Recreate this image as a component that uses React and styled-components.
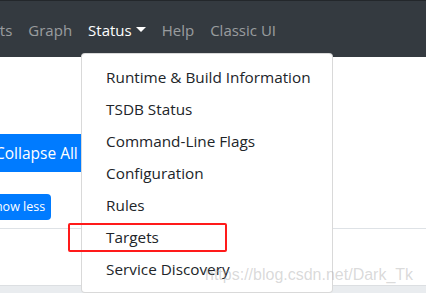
import React from "react";
import styled, { createGlobalStyle } from "styled-components";

const Global = createGlobalStyle`
  html, body {
    margin: 0;
    padding: 0;
    width: 426px;
    height: 293px;
    overflow: hidden;
    background: #ffffff;
    font-family: "Open Sans", "Noto Sans", sans-serif;
  }
`;

const Page = styled.div`
  position: relative;
  width: 426px;
  height: 293px;
  overflow: hidden;
  display: flex;
  flex-direction: column;
`;

const Navbar = styled.nav`
  height: 56px;
  background: #343a40;
  border-top: 1px solid #23272b;
  display: flex;
  align-items: center;
  flex-shrink: 0;
`;

const NavList = styled.ul`
  display: flex;
  list-style: none;
  margin: 2px 0 0 -36px;
  padding: 0;
`;

const NavItem = styled.li`
  position: relative;
`;

const NavLink = styled.a`
  display: flex;
  align-items: center;
  padding: 8px 8px;
  font-size: 15px;
  line-height: 24px;
  color: ${(p) => (p.$active ? "#ffffff" : "rgba(255,255,255,0.5)")};
  text-decoration: none;
  white-space: nowrap;
`;

const Caret = styled.span`
  display: inline-block;
  margin-left: 4px;
  margin-top: -2px;
  border-top: 5px solid #ffffff;
  border-left: 5px solid transparent;
  border-right: 5px solid transparent;
`;

const Menu = styled.div`
  position: absolute;
  top: 43px;
  left: 1px;
  width: 250px;
  padding: 7px 0 7px;
  background: #ffffff;
  border: 1px solid rgba(0, 0, 0, 0.15);
  border-radius: 4px;
  z-index: 10;
`;

const MenuItem = styled.a`
  display: block;
  padding: 4px 24px;
  font-size: 15.3px;
  line-height: 24px;
  color: #212529;
  white-space: nowrap;
`;

const Content = styled.main`
  flex: 1;
  display: flex;
  flex-direction: column;
  padding-top: 77px;
`;

const Button = styled.button`
  align-self: flex-start;
  border: none;
  background: #007bff;
  color: #ffffff;
  font-family: "Open Sans", "Noto Sans", sans-serif;
  font-size: ${(p) => (p.$small ? "12.5px" : "15.5px")};
  line-height: ${(p) => (p.$small ? "20px" : "24px")};
  padding: ${(p) => (p.$small ? "3px 6px" : "7px 12px")};
  border-radius: 4px;
  margin-left: ${(p) => (p.$small ? "-17px" : "-17px")};
  white-space: nowrap;
`;

const Spacer = styled.div`
  height: ${(p) => p.$h}px;
  flex-shrink: 0;
`;

const Rule = styled.div`
  height: 1px;
  background: #dee2e6;
  flex-shrink: 0;
`;

const Footer = styled.div`
  margin-top: auto;
  height: 7px;
  background: #e9ecef;
  border-top: 1px solid #dcdfe2;
  flex-shrink: 0;
`;

const Highlight = styled.div`
  position: absolute;
  left: 68px;
  top: 223px;
  width: 155px;
  height: 25px;
  border: 2px solid #ff1a1a;
  border-radius: 2px;
  z-index: 20;
`;

const Watermark = styled.div`
  position: absolute;
  left: 205px;
  top: 266px;
  font-family: "Liberation Sans", Arial, sans-serif;
  font-size: 16px;
  color: rgba(160, 160, 160, 0.4);
  z-index: 30;
  white-space: nowrap;
`;

const navItems = ["Alerts", "Graph"];
const menuItems = [
  "Runtime & Build Information",
  "TSDB Status",
  "Command-Line Flags",
  "Configuration",
  "Rules",
  "Targets",
  "Service Discovery",
];

export default function App() {
  return (
    <Page>
      <Global />
      <Navbar>
        <NavList>
          {navItems.map((n) => (
            <NavItem key={n}>
              <NavLink>{n}</NavLink>
            </NavItem>
          ))}
          <NavItem>
            <NavLink $active>
              Status
              <Caret />
            </NavLink>
            <Menu>
              {menuItems.map((m) => (
                <MenuItem key={m}>{m}</MenuItem>
              ))}
            </Menu>
          </NavItem>
          <NavItem>
            <NavLink>Help</NavLink>
          </NavItem>
          <NavItem>
            <NavLink>Classic UI</NavLink>
          </NavItem>
        </NavList>
      </Navbar>
      <Content>
        <Button>Collapse All</Button>
        <Spacer $h={22} />
        <Button $small>show less</Button>
        <Spacer $h={8} />
        <Rule />
        <Footer />
      </Content>
      <Highlight />
      <Watermark>https://blog.csdn.net/Dark_Tk</Watermark>
    </Page>
  );
}
